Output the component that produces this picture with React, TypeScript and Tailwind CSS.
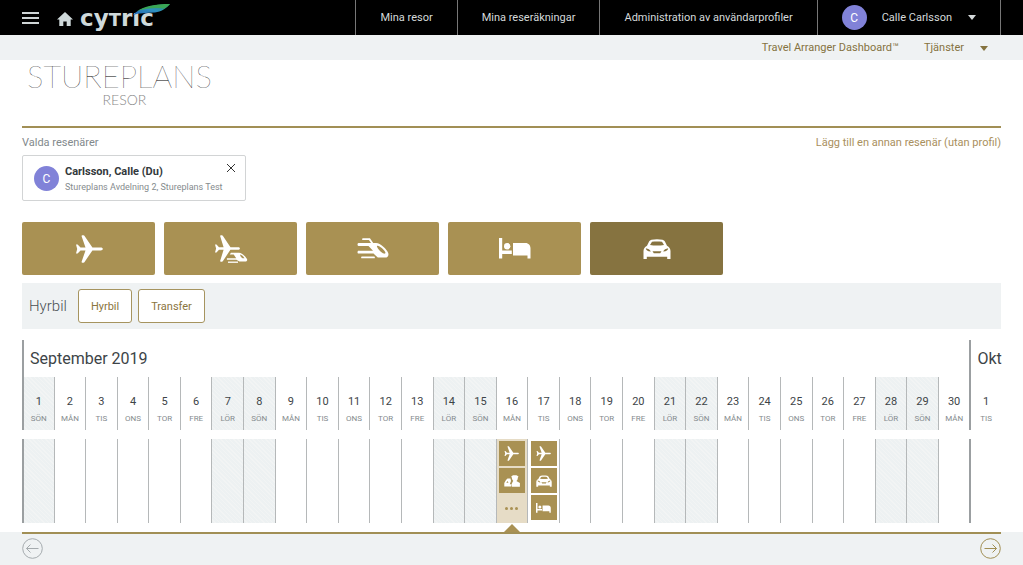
import type { ReactNode } from "react";

type IconProps = { className?: string };

const PlaneIcon = ({ className }: IconProps) => (
  <svg viewBox="0 0 28 28" fill="currentColor" className={className} aria-hidden="true">
    <path d="M1 9.4h1.6l2.9 3.2h5L6.6 1.2C6.5.6 6.8.3 7.3.3h1.2c.4 0 .7.2.9.5l8 11.8h8.3c1.2 0 2.1.6 2.1 1.4s-.9 1.4-2.1 1.4h-8.3l-8 11.8c-.2.3-.5.5-.9.5H7.3c-.5 0-.8-.3-.7-.9l3.9-11.4h-5l-2.9 3.2H1l1.2-4.6z" />
  </svg>
);

const TrainIcon = ({ className }: IconProps) => (
  <svg viewBox="0 0 32 21" fill="none" className={className} aria-hidden="true">
    <path d="M6 1.2h6.5l3.500 5" stroke="currentColor" strokeWidth="1.800" strokeLinecap="round" />
    <path
      d="M1.500 5H19c4.500 0 11 6.500 12.200 10 .8 2.600-.5 4.600-3 4.600h-7.400l-4.300-4H1.500C.2 15.600.2 12.800 1.500 12.800H16L11.500 8h-10C.2 8 .2 5 1.500 5z"
      fill="currentColor"
    />
    <path d="M5 19.400h12" stroke="currentColor" strokeWidth="1.800" strokeLinecap="round" />
    <path
      d="M20.500 7.800c2.500.3 6.200 3.700 7.800 6.400.5 1-.2 1.600-1.300 1.400-2.800-.6-6-4.400-7-6.800-.2-.6 0-1 .5-1z"
      className="fill-[#a99153]"
    />
  </svg>
);

const PlaneTrainIcon = ({ className }: IconProps) => (
  <svg viewBox="0 0 34 28" fill="none" className={className} aria-hidden="true">
    <path d="M1 9.400h1.500l2.500 2.800h4.600L6.200 1.200C6.100.6 6.300.3 6.800.3h1.100c.4 0 .7.2.9.5l7.700 11.400h7.500c1.100 0 1.900.5 1.900 1.300s-.8 1.300-1.900 1.300h-7.600L8.800 26.200c-.2.300-.5.500-.9.500H6.800c-.5 0-.7-.3-.6-.9l3.400-11H5l-2.500 2.800H1l1.100-4.100z" fill="currentColor" />
    <path d="M17 17.800h8c3 0 7 4.200 8 6.300.6 1.400-.2 2.400-1.600 2.400h-6l-3-1.700h-9.500v-1.600h9.300l-2.500-3.600h-4z" fill="currentColor" />
    <path d="M14 27.200h10" stroke="currentColor" strokeWidth="1.300" />
    <path d="M26 19.500c1.600.4 3.600 2 4.500 3.800h-2c-1.400-.8-2.300-2.300-2.500-3.800z" className="fill-[#a99153]" />
  </svg>
);

const BedIcon = ({ className }: IconProps) => (
  <svg viewBox="0 0 32 21" fill="currentColor" className={className} aria-hidden="true">
    <path d="M0 0h3.200v12.600h9.600V16H3.200v4.600H0z" />
    <circle cx="8.200" cy="8.300" r="3.200" />
    <path d="M14 5h12.500c3 0 5 2.300 5 5.300v10.300h-3V17.500H14z" />
  </svg>
);

const CarIcon = ({ className }: IconProps) => (
  <svg viewBox="0 0 28 20" fill="currentColor" className={className} aria-hidden="true">
    <path
      fillRule="evenodd"
      d="M8.500.7C11.500 0 16.500 0 19.500.7c1.500.3 2.300 1.500 2.900 2.800l1.600 3.200c2.200 1 3.500 3 3.500 5.300v8h-3.300v-2.300H3.800V20H.5v-8c0-2.300 1.300-4.300 3.500-5.300l1.600-3.200C6.200 2.200 7 1 8.500.7zM9 2.800 7 6c4 .7 10 .7 14 0l-2-3.200c-3-.5-7-.5-10 0zM2.800 9.300c.1 2 1.900 3.300 5 3.200-.8-1.700-2.700-2.900-5-3.200zm22.400 0c-2.300.3-4.200 1.500-5 3.200 3.100.1 4.900-1.200 5-3.200zM9.500 12.300l1.300 1.900h6.400l1.300-1.900z"
    />
  </svg>
);

// Driver next to a small car
const ServiceIcon = ({ className }: IconProps) => (
  <svg viewBox="0 0 16 12" fill="currentColor" className={className} aria-hidden="true">
    <path d="M7.200 1.500 9 .2h3.500l2 1.300-.7 1.200c0 1.500-.5 2.600-1.500 3.300l3.600 2v3.700H7.800l-.5-2 1.500-3.200.6-.6C8.400 5 7.900 4 7.900 2.700z" />
    <path fillRule="evenodd" d="M2 5 3.500 3.500h3L7 6 5.800 9.300H7v2.200H.3V8zm1.500 1L2.300 7.700h2.200z" />
  </svg>
);

const Caret = ({ className }: IconProps) => (
  <svg viewBox="0 0 8 5" fill="currentColor" className={className} aria-hidden="true">
    <path d="M0 0h8L4 5z" />
  </svg>
);

const CytricLogo = () => (
  <svg viewBox="0 0 92 30" className="h-[30px] w-[92px]" role="img" aria-label="cytric">
    <defs>
      <linearGradient id="wing" x1="0" y1="1" x2="1" y2="0">
        <stop offset="0" stopColor="#2467b5" />
        <stop offset="0.5" stopColor="#2f8fc0" />
        <stop offset="1" stopColor="#2c9a55" />
      </linearGradient>
    </defs>
    <text x="1" y="23" fontSize="23" fontWeight="700" fill="#cfd9da" fontFamily="DejaVu Sans, sans-serif">
      cy<tspan fontSize="18">T</tspan>rıc
    </text>
    <path d="M54 12C60 5 74 1 91 1c-4 5-9 7.500-15 8.500C67 10 60 10 54 12z" fill="url(#wing)" />
    <path d="M58 8C65 3.500 76 1 91 1c-2 2-4 3.500-6 4.500C76 4.500 67 5.500 58 8z" fill="#3aa655" />
  </svg>
);

const Avatar = ({ children }: { children: ReactNode }) => (
  <span className="flex size-[25px] shrink-0 items-center justify-center rounded-full bg-[#8182d8] pt-px text-xs text-white">
    {children}
  </span>
);

const navItems = ["Mina resor", "Mina reseräkningar", "Administration av användarprofiler"];

const products = [
  { label: "Flyg", icon: <PlaneIcon className="size-7" /> },
  { label: "Flyg och tåg", icon: <PlaneTrainIcon className="h-7 w-[34px]" /> },
  { label: "Tåg", icon: <TrainIcon className="h-[21px] w-8" /> },
  { label: "Hotell", icon: <BedIcon className="h-[21px] w-8" /> },
  { label: "Hyrbil", icon: <CarIcon className="h-5 w-7" />, active: true },
];

const weekdays = ["SÖN", "MÅN", "TIS", "ONS", "TOR", "FRE", "LÖR"];

const days = Array.from({ length: 31 }, (_, i) => ({
  date: i < 30 ? i + 1 : 1,
  name: weekdays[i % 7],
  weekend: i % 7 === 0 || i % 7 === 6,
  monthStart: i === 0 || i === 30,
}));

const bookings: Record<number, ReactNode[]> = {
  15: [<PlaneIcon className="size-[15px]" />, <ServiceIcon className="h-3 w-4" />],
  16: [
    <PlaneIcon className="size-[15px]" />,
    <CarIcon className="h-3 w-4" />,
    <BedIcon className="h-[10px] w-[15px]" />,
  ],
};

const hatch =
  "bg-[repeating-linear-gradient(45deg,#edf1f2_0px,#edf1f2_2px,#f2f4f4_2px,#f2f4f4_3px)]";

const cellBorder = (monthStart: boolean) =>
  monthStart ? "border-l-2 border-[#9b9fa1]" : "border-l border-[#b5b8b9]";

const TopBar = () => (
  <header className="flex h-[35px] items-center justify-between bg-black px-[22px] text-[11px] text-[#d5dadb]">
    <div className="flex items-center">
      <button type="button" aria-label="Meny" className="flex w-[17px] flex-col gap-[3px]">
        <span className="h-[2px] bg-[#cfd5d6]" />
        <span className="h-[2px] bg-[#cfd5d6]" />
        <span className="h-[2px] bg-[#cfd5d6]" />
      </button>
      <a href="#" aria-label="Hem" className="ml-[18px]">
        <svg viewBox="0 0 16 14" fill="#cfd9da" className="mt-[3px] h-[14px] w-4">
          <path d="M8 0l8 7.500h-2.300V14H9.700V9.500H6.300V14H2.300V7.500H0z" />
        </svg>
      </a>
      <a href="#" className="ml-[6px]">
        <CytricLogo />
      </a>
    </div>
    <nav className="flex h-full border-r border-[#777]">
      {navItems.map((item) => (
        <a key={item} href="#" className="flex items-center border-l border-[#777] px-6 pt-[2px]">
          {item}
        </a>
      ))}
      <button type="button" className="flex items-center border-l border-[#777] px-6">
        <Avatar>C</Avatar>
        <span className="ml-[15px] pt-[2px]">Calle Carlsson</span>
        <Caret className="ml-4 h-[5px] w-2" />
      </button>
    </nav>
  </header>
);

export default function App() {
  return (
    <div className="flex min-h-screen flex-col bg-white font-[Roboto,sans-serif] text-[#3d4447]">
      <TopBar />
      <div className="flex h-[25px] items-center justify-end bg-[#eff2f3] pt-px pr-[35px] text-[11px] text-[#85733f]">
        <a href="#">Travel Arranger Dashboard™</a>
        <button type="button" className="ml-[25px] flex items-center">
          Tjänster
          <Caret className="ml-4 h-[5px] w-2" />
        </button>
      </div>

      <main className="mx-[22px] flex flex-col">
        <div className="h-[66px] pl-[5px] font-[Lato,sans-serif]">
          <div className="flex w-max flex-col items-center">
            <span className="text-[31px] leading-8 font-extralight text-black">STUREPLANS</span>
            <span className="pt-px pl-[10px] text-sm leading-[14px] font-light text-[#888]">RESOR</span>
          </div>
        </div>

        <div className="flex h-[29px] items-center justify-between border-t-2 border-[#a18f55] pt-[3px] text-[11px]">
          <span className="text-[#82898c]">Valda resenärer</span>
          <a href="#" className="text-[#a98f5d]">
            Lägg till en annan resenär (utan profil)
          </a>
        </div>

        <div className="flex h-[46px] w-56 rounded-xs border border-[#d2d4d5] pr-[9px] pl-[11px]">
          <div className="flex grow items-center gap-[6px]">
            <Avatar>C</Avatar>
            <div className="flex flex-col gap-[3px] pt-[2px]">
              <span className="text-[11px] leading-[13px] font-bold text-[#33393c]">Carlsson, Calle (Du)</span>
              <span className="text-[9px] leading-3 whitespace-nowrap text-[#858b8e]">
                Stureplans Avdelning 2, Stureplans Test
              </span>
            </div>
          </div>
          <button type="button" aria-label="Ta bort" className="mt-[7px] size-[10px]">
            <svg viewBox="0 0 10 10" stroke="#333" strokeWidth="1" className="size-[10px]">
              <path d="M1 1l8 8M9 1L1 9" />
            </svg>
          </button>
        </div>

        <div className="mt-[21px] grid max-w-[701px] grid-cols-5 gap-[9px]">
          {products.map((product) => (
            <button
              key={product.label}
              type="button"
              aria-label={product.label}
              className={`flex h-[53px] items-center justify-center rounded-xs text-white ${
                product.active ? "bg-[#867340]" : "bg-[#a99153]"
              }`}
            >
              {product.icon}
            </button>
          ))}
        </div>

        <section className="mt-2 flex h-[46px] items-center bg-[#eff2f3] pl-[7px]">
          <h2 className="text-[15px] font-light text-[#4a5053]">Hyrbil</h2>
          <div className="ml-[11px] flex gap-[6px] text-[11px] text-[#8a7540]">
            <button type="button" className="h-[34px] rounded-[3px] border border-[#a6945f] bg-white px-3 pt-[2px]">
              Hyrbil
            </button>
            <button type="button" className="h-[34px] rounded-[3px] border border-[#a6945f] bg-white px-3 pt-[2px]">
              Transfer
            </button>
          </div>
        </section>

        <section className="mt-[11px] flex flex-col">
          <div className="grid h-[37px] grid-cols-31 text-base">
            <h3 className="col-span-30 flex items-center border-l-2 border-[#9b9fa1] pl-[6px]">September 2019</h3>
            <h3 className="flex items-center border-l-2 border-[#9b9fa1] pl-[6px]">Okt</h3>
          </div>
          <div className="grid h-[53px] grid-cols-31">
            {days.map((day, i) => (
              <div
                key={i}
                className={`flex flex-col items-center pt-[18px] ${cellBorder(day.monthStart)} ${
                  day.weekend ? hatch : ""
                }`}
              >
                <span className="text-[11px] leading-[13px]">{day.date}</span>
                <span className="mt-[5px] text-[8px] leading-3 text-[#858b8e]">{day.name}</span>
              </div>
            ))}
          </div>
          <div className="mt-[9px] grid h-[84px] grid-cols-31">
            {days.map((day, i) => (
              <div
                key={i}
                className={`relative flex flex-col items-center gap-[2px] pt-[2px] ${cellBorder(day.monthStart)} ${
                  day.weekend ? hatch : ""
                } ${i === 15 ? "bg-[#e6dcc6]" : ""}`}
              >
                {bookings[i]?.map((icon, n) => (
                  <span key={n} className="flex h-[25px] w-[26px] items-center justify-center bg-[#a99153] text-white">
                    {icon}
                  </span>
                ))}
                {i === 15 && (
                  <>
                    <span className="flex h-[27px] items-center gap-[2px]">
                      <i className="size-[3px] rounded-full bg-[#a99153]" />
                      <i className="size-[3px] rounded-full bg-[#a99153]" />
                      <i className="size-[3px] rounded-full bg-[#a99153]" />
                    </span>
                    <svg viewBox="0 0 16 8" className="absolute top-[85px] h-2 w-4" fill="#a99153">
                      <path d="M8 0l8 8H0z" />
                    </svg>
                  </>
                )}
              </div>
            ))}
          </div>
        </section>
      </main>

      <footer className="mt-[9px] grow bg-[#eff2f3] px-[22px]">
        <div className="flex justify-between border-t-2 border-[#a18f55] pt-1">
          <button type="button" aria-label="Föregående" className="text-[#a5abae]">
            <svg viewBox="0 0 21 21" fill="none" stroke="currentColor" className="size-[21px]">
              <circle cx="10.500" cy="10.500" r="9.800" />
              <path d="M16.500 10.500h-12M8.500 6.500l-4 4 4 4" />
            </svg>
          </button>
          <button type="button" aria-label="Nästa" className="text-[#a18f55]">
            <svg viewBox="0 0 21 21" fill="none" stroke="currentColor" className="size-[21px]">
              <circle cx="10.500" cy="10.500" r="9.800" />
              <path d="M4.500 10.500h12M12.500 6.500l4 4-4 4" />
            </svg>
          </button>
        </div>
      </footer>
    </div>
  );
}
